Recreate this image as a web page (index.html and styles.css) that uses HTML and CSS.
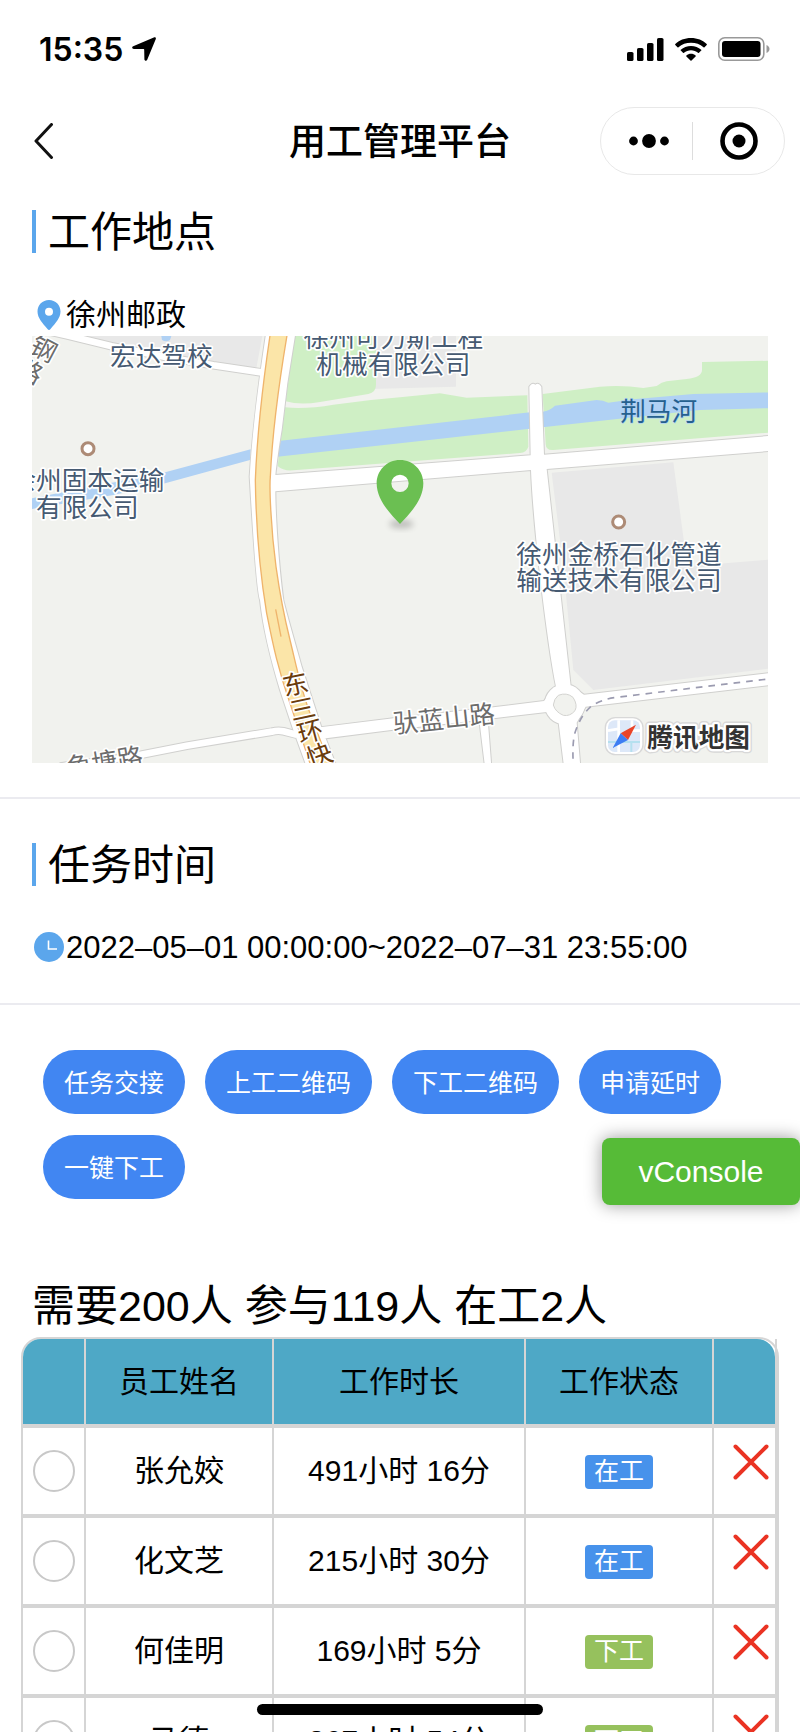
FILE: index.html
```html
<!DOCTYPE html>
<html lang="zh-CN">
<head>
<meta charset="utf-8">
<meta name="viewport" content="width=device-width, initial-scale=1">
<title>用工管理平台</title>
<link rel="stylesheet" href="styles.css">
</head>
<body>
<div class="screen">
  <header class="top">
    <div class="status">
      <div class="status-left">
        <span class="clock">15:35</span>
        <svg class="i-loc" viewBox="0 0 24 24" aria-hidden="true"><path d="M21.800.4C23.400-.2 24.300.9 23.700 2.300L15.200 22.700C14.600 24.400 12.500 24 12.400 22.300L12.200 12.700Q12.200 12.100 11.600 12.100L1.900 12C0 11.900-.5 10 1.200 9.200Z"/></svg>
      </div>
      <div class="status-right">
        <svg class="i-signal" viewBox="0 0 37 23" aria-hidden="true"><rect x="0" y="14" width="6.500" height="9" rx="1.600"/><rect x="10" y="10" width="6.500" height="13" rx="1.600"/><rect x="20" y="5" width="6.500" height="18" rx="1.600"/><rect x="30" y="0" width="6.500" height="23" rx="1.600"/></svg>
        <svg class="i-wifi" viewBox="0 0 32 23" aria-hidden="true"><path d="M16 0C22.300 0 28 2.300 31.700 6.100Q32.100 6.600 31.700 7L29.500 9.200Q29 9.600 28.500 9.200C25.100 6.200 20.800 4.800 16 4.800S6.900 6.200 3.500 9.200Q3 9.600 2.500 9.200L.3 7Q-.1 6.600.3 6.100C4 2.300 9.700 0 16 0ZM16 7.900C20 7.900 23.500 9.400 26.200 11.700Q26.700 12.200 26.200 12.600L24 14.800Q23.500 15.200 23 14.800C21.100 13.200 18.700 12.300 16 12.300S10.900 13.200 9 14.800Q8.500 15.200 8 14.800L5.800 12.600Q5.300 12.200 5.800 11.700C8.500 9.400 12 7.900 16 7.900ZM16 15.800C17.800 15.800 19.400 16.500 20.600 17.400Q21.100 17.900 20.600 18.400L16.500 22.600Q16 23.100 15.500 22.600L11.400 18.400Q10.900 17.900 11.400 17.400C12.600 16.500 14.200 15.800 16 15.800Z"/></svg>
        <svg class="i-battery" viewBox="0 0 52 24" aria-hidden="true"><rect x=".8" y=".8" width="45" height="22.400" rx="6" fill="none" stroke="#999" stroke-width="1.600"/><rect x="4" y="4" width="38.500" height="16" rx="3"/><path d="M48.500 8C52.500 9.500 52.500 14.500 48.500 16Z" fill="#999"/></svg>
      </div>
    </div>
    <div class="nav">
      <button class="back" type="button" aria-label="返回"><svg viewBox="0 0 20 36" aria-hidden="true"><path d="M17.500 1.500 2 18 17.500 34.500"/></svg></button>
      <h1 class="title">用工管理平台</h1>
      <div class="capsule">
        <button type="button" aria-label="更多"><svg class="i-more" viewBox="0 0 40 14" aria-hidden="true"><circle cx="4.500" cy="7" r="4.400"/><circle cx="20" cy="7" r="6.900"/><circle cx="35.500" cy="7" r="4.400"/></svg></button>
        <button type="button" aria-label="关闭"><svg class="i-close" viewBox="0 0 38 38" aria-hidden="true"><circle cx="19" cy="19" r="16.500" fill="none" stroke="#000" stroke-width="4.600"/><circle cx="19" cy="19" r="6.500"/></svg></button>
      </div>
    </div>
  </header>

  <main class="content">
    <section class="section place">
      <h2 class="heading">工作地点</h2>
      <p class="info">
        <svg class="info-icon" viewBox="0 0 30 30" aria-hidden="true"><path fill="#5ba6ec" fill-rule="evenodd" d="M15 0C21.500 0 26.500 5 26.500 11.500 26.500 18 21.500 23 16.500 29Q15 31 13.500 29C8.500 23 3.500 18 3.500 11.500 3.500 5 8.500 0 15 0ZM15 7.800A4 4 0 1 0 15 15.800 4 4 0 1 0 15 7.800Z"/></svg>
        <span>徐州邮政</span>
      </p>
      <svg class="map" viewBox="96 48 2208 1280" role="img" aria-label="工作地点地图">
        <defs>
          <filter id="soft" x="-50%" y="-50%" width="200%" height="200%"><feGaussianBlur stdDeviation="9"/></filter>
          <g id="roads">
            <path d="M797 48C770 230 758 330 749 470C757 600 768 800 780 840C790 930 810 1010 840 1110L880 1230 920 1340H1010L965 1225 905 1040C880 950 862 890 850 840C832 700 826 560 826 514L1593 450C1600 620 1640 960 1668 1100L1632 1143 1480 1162 1180 1195 960 1222V1257L1180 1229 1438 1200 1455 1340H1474L1463 1197 1640 1176 1676 1208 1692 1340H1741L1730 1208 1757 1160 2320 1094V1058L1752 1124 1712 1098 1640 447 2320 392V347L1632 404 1624 200Q1616 186 1606 194 1596 186 1588 200L1592 406 826 465C830 430 838 370 845 330L862 190 886 40Z"/>
            <circle cx="1694" cy="1153" r="60"/>
          </g>
          <g id="lanes">
            <path d="M890 1244 850 1234Q835 1230 815 1235L560 1277 400 1309 180 1340"/>
            <path d="M96 22 200 46 335 79 500 112 640 136 790 158"/>
          </g>
        </defs>
        <rect x="90" y="40" width="2220" height="1300" fill="#f1f2ee"/>
        <path fill="#e8e8e8" d="M200 48H787L768 150 640 124 340 78ZM1120 48H1368V200L1110 207ZM1655 458 2020 427 2052 665V740L2320 718V1044L1780 1110 1720 1050 1690 740Z"/>
        <path fill="#cfefc5" d="M884 40H1128V195Q1128 217 1105 222L960 246Q900 256 857 244ZM855 262Q920 268 1000 254 1100 240 1200 232L1320 220 1400 233 1582 226 1585 380Q1580 397 1560 399L880 451Q850 454 833 438ZM1628 222 1800 200Q1870 195 1930 204L1970 198Q1985 186 2000 184L2060 177Q2106 172 2106 150V126L2320 122V337L1660 390Q1638 392 1637 372Z"/>
        <path fill="#b0d1f4" d="M484 48H514L510 60Q498 67 486 60ZM842 362 1200 322 1590 277V326L1200 370 832 410ZM1628 275Q1650 272 1665 257L1790 240Q1810 240 1825 248L1900 238 2080 222 2320 217V264L2100 270 1960 285 1628 322ZM752 388 490 458 96 535V567L340 525 490 491 750 420Z"/>
        <use href="#roads" class="casing"/>
        <use href="#lanes" class="lane-casing"/>
        <use href="#roads" class="paving"/>
        <use href="#lanes" class="lane"/>
        <path fill="#f1f2ee" stroke="#d3d3d0" stroke-width="3" d="M1675 1126Q1700 1116 1719 1132 1734 1155 1725 1172 1710 1190 1690 1186 1666 1176 1660 1155 1662 1136 1675 1126Z"/>
        <path fill="#fbe5a8" stroke="#efb46c" stroke-width="4" d="M811 40C790 180 772 330 766 480C768 620 780 760 800 880C820 980 835 1050 870 1150L935 1345H993L930 1180C900 1100 885 1020 870 960C850 880 835 790 828 740C812 620 808 500 811 470C815 380 830 230 862 40Z"/>
        <path class="seam" d="M827 868 843 950"/>
        <path class="rail" d="M2296 1078 2080 1104 1850 1132Q1800 1138 1770 1162 1740 1190 1725 1238 1716 1270 1720 1335"/>
        <g class="poi-ring"><circle cx="264" cy="386" r="18"/><circle cx="1856" cy="606" r="18"/></g>
        <g class="label">
          <text x="484" y="138">宏达驾校</text>
          <text x="1180" y="82">徐州可力斯工程</text>
          <text x="1180" y="161">机械有限公司</text>
          <text x="262" y="510">余州固本运输</text>
          <text x="262" y="590">有限公司</text>
          <text x="1857" y="731">徐州金桥石化管道</text>
          <text x="1857" y="811">输送技术有限公司</text>
        </g>
        <g class="label label-road">
          <text transform="translate(118 112) rotate(28)">钢</text>
          <text transform="translate(76 178) rotate(28)">路</text>
          <text transform="translate(318 1354) rotate(-9)">鱼塘路</text>
          <text transform="translate(1334 1224) rotate(-6)">驮蓝山路</text>
        </g>
        <g class="label label-highway">
          <text transform="translate(892 1120) rotate(-12)">东</text>
          <text transform="translate(914 1194) rotate(-12)">三</text>
          <text transform="translate(938 1262) rotate(-15)">环</text>
          <text transform="translate(968 1332) rotate(-20)">快</text>
        </g>
        <text class="label label-river" x="1976" y="302">荆马河</text>
        <ellipse cx="1204" cy="612" rx="36" ry="13" fill="#000" opacity=".22" filter="url(#soft)"/>
        <path fill="#6bbf52" fill-rule="evenodd" d="M1200 420C1240 420 1270 452 1270 490C1270 540 1230 580 1200 612C1170 580 1130 540 1130 490C1130 452 1160 420 1200 420ZM1200 464A26 26 0 1 0 1200 516A26 26 0 1 0 1200 464Z"/>
        <g>
          <rect x="1816" y="1193" width="113" height="111" rx="30" fill="#fff" stroke="#d8d8d8" stroke-width="4"/>
          <rect x="1824" y="1201" width="96" height="95" rx="20" fill="#dde8f8"/>
          <path d="M1856 1201V1296M1896 1201V1228M1824 1232 1860 1226M1890 1232H1920" stroke="#fff" stroke-width="8"/>
          <path d="M1824 1266H1920M1894 1266V1296" stroke="#b5e0ef" stroke-width="6"/>
          <path d="M1908 1214 1862 1240 1884 1260Z" fill="#ea4429"/>
          <path d="M1838 1284 1862 1240 1884 1260Z" fill="#3d7df3"/>
          <text class="brand brand-edge" x="1942" y="1280" aria-hidden="true">腾讯地图</text>
          <text class="brand" x="1942" y="1280">腾讯地图</text>
        </g>
      </svg>
    </section>

    <section class="section time">
      <h2 class="heading">任务时间</h2>
      <p class="info">
        <svg class="info-icon" viewBox="0 0 30 30" aria-hidden="true"><circle cx="15" cy="15" r="15" fill="#5ba6ec"/><path d="M14.500 8.500V17H23" fill="none" stroke="#fff" stroke-width="1.600"/></svg>
        <span>2022–05–01 00:00:00~2022–07–31 23:55:00</span>
      </p>
    </section>

    <div class="actions">
      <button type="button">任务交接</button>
      <button type="button">上工二维码</button>
      <button type="button">下工二维码</button>
      <button type="button">申请延时</button>
      <button type="button">一键下工</button>
    </div>

    <h2 class="summary">需要200人 参与119人 在工2人</h2>

    <div class="table-box">
      <table class="staff">
        <thead>
          <tr><th class="narrow"></th><th class="mid">员工姓名</th><th class="wide">工作时长</th><th class="mid">工作状态</th><th class="narrow"></th></tr>
        </thead>
        <tbody>
          <tr>
            <td class="pick"><input type="radio" name="r1" aria-label="张允姣"></td><td>张允姣</td><td>491小时 16分</td><td class="state"><span class="tag">在工</span></td>
            <td class="drop"><button class="remove" type="button" aria-label="移除"><svg viewBox="0 0 36 36" aria-hidden="true"><path d="M2.500 2.500 33.500 33.500M33.500 2.500 2.500 33.500"/></svg></button></td>
          </tr>
          <tr>
            <td class="pick"><input type="radio" name="r2" aria-label="化文芝"></td><td>化文芝</td><td>215小时 30分</td><td class="state"><span class="tag">在工</span></td>
            <td class="drop"><button class="remove" type="button" aria-label="移除"><svg viewBox="0 0 36 36" aria-hidden="true"><path d="M2.500 2.500 33.500 33.500M33.500 2.500 2.500 33.500"/></svg></button></td>
          </tr>
          <tr>
            <td class="pick"><input type="radio" name="r3" aria-label="何佳明"></td><td>何佳明</td><td>169小时 5分</td><td class="state"><span class="tag off">下工</span></td>
            <td class="drop"><button class="remove" type="button" aria-label="移除"><svg viewBox="0 0 36 36" aria-hidden="true"><path d="M2.500 2.500 33.500 33.500M33.500 2.500 2.500 33.500"/></svg></button></td>
          </tr>
          <tr>
            <td class="pick"><input type="radio" name="r4" aria-label="马德"></td><td>马德</td><td>267小时 54分</td><td class="state"><span class="tag off">下工</span></td>
            <td class="drop"><button class="remove" type="button" aria-label="移除"><svg viewBox="0 0 36 36" aria-hidden="true"><path d="M2.500 2.500 33.500 33.500M33.500 2.500 2.500 33.500"/></svg></button></td>
          </tr>
        </tbody>
      </table>
    </div>
  </main>
  <button class="vconsole" type="button">vConsole</button>
  <div class="home-bar"></div>
</div>
</body>
</html>
```
FILE: styles.css
```css
* { box-sizing: border-box; }
body {
  margin: 0;
  background: #fff;
  color: #000;
  font-family: "Liberation Sans", "Noto Sans CJK SC", sans-serif;
  font-size: 30px;
}
button { font: inherit; border: 0; padding: 0; background: none; color: inherit; }
svg { display: block; }
h1, h2, p { margin: 0; font-weight: 400; }

.screen { position: relative; height: 100vh; overflow: hidden; display: flex; flex-direction: column; }

.top { flex: none; }
.status { display: flex; justify-content: space-between; align-items: center; height: 98px; padding: 0 30px 0 39px; }
.status-left, .status-right { display: flex; align-items: center; }
.status-left { gap: 9px; }
.status-right { gap: 11px; }
.clock { font-family: Inter, sans-serif; font-weight: 600; font-size: 32px; }
.i-loc { width: 24px; height: 24px; }
.i-signal { width: 37px; height: 23px; }
.i-wifi { width: 32px; height: 23px; }
.i-battery { width: 52px; height: 24px; }

.nav { display: grid; grid-template-columns: minmax(0, 1fr) auto minmax(0, 1fr); align-items: center; height: 86px; padding: 0 15px; }
.back { justify-self: start; margin-left: 19px; }
.back svg { width: 20px; height: 36px; fill: none; stroke: #111; stroke-width: 3; stroke-linecap: round; stroke-linejoin: round; }
.title { padding-top: 4px; font-size: 37px; font-weight: 500; line-height: 44px; }
.capsule { justify-self: end; display: flex; width: 185px; height: 68px; border: 1px solid #e8e8e8; border-radius: 34px; }
.capsule button { flex: 1; display: flex; align-items: center; justify-content: center; margin: 14px 0; }
.capsule button + button { border-left: 1px solid #ddd; }
.i-more { width: 40px; height: 14px; margin-left: 5px; }
.i-close { width: 38px; height: 38px; }

.content { flex: 1; min-height: 0; overflow: hidden; }
.section { padding: 0 32px; border-bottom: 2px solid #ebebf0; }
.place { padding-top: 26px; padding-bottom: 34px; }
.time { padding-top: 44px; padding-bottom: 34px; }
.heading { border-left: 4px solid #5ba6ec; padding: 2px 0 0 12px; font-size: 42px; line-height: 41px; }
.info { display: flex; align-items: center; gap: 2px; padding-left: 2px; font-size: 30px; line-height: 43px; margin-top: 40px; }
.time .info { font-size: 31px; }
.info-icon { width: 30px; height: 30px; flex: none; }
.map { width: 100%; height: auto; }

.casing { fill: #fff; stroke: #d0d0ce; stroke-width: 6; }
.paving { fill: #fff; stroke: none; }
.lane-casing { fill: none; stroke: #d0d0ce; stroke-width: 26; }
.lane { fill: none; stroke: #fff; stroke-width: 20; }
.seam { fill: none; stroke: #efb46c; stroke-width: 4; }
.rail { fill: none; stroke: #9b9bb0; stroke-width: 5; stroke-dasharray: 20 18; }
.poi-ring { fill: #fff; stroke: #ad8b76; stroke-width: 9; }
.label { font-size: 77px; fill: #465a72; text-anchor: middle; paint-order: stroke; stroke: #fff; stroke-width: 10; stroke-linejoin: round; }
.label-road { fill: #6c6c6c; }
.label-highway { fill: #6b3c0c; }
.label-river { fill: #25608f; stroke: #b0d1f4; stroke-width: 4; }
.brand { font-size: 77px; font-weight: 700; fill: #333; paint-order: stroke; stroke: #fff; stroke-width: 14; stroke-linejoin: round; }
.brand-edge { stroke: #d8d8d8; stroke-width: 22; }

.actions { display: flex; flex-wrap: wrap; gap: 21px 20px; padding: 45px 43px 0; }
.actions button { height: 64px; padding: 0 21px 2px; border-radius: 32px; background: #4186f2; color: #fff; font-size: 25px; }

.summary { margin-top: 76px; padding: 0 32px; font-size: 43px; line-height: 62px; }

.table-box { margin: 0 21px; border: 2px solid #d5d5d5; border-radius: 20px 20px 0 0; }
.staff { width: 100%; table-layout: fixed; border-collapse: separate; border-spacing: 0; text-align: center; }
.staff th, .staff td { height: 90px; padding: 0 0 5px; font-weight: 400; border-right: 2px solid #d5d5d5; border-bottom: 4px solid #d5d5d5; vertical-align: middle; }
.staff th { height: 89px; background: #4ea8c6; background-clip: padding-box; }
.staff th:first-child { border-top-left-radius: 18px; }
.staff th:last-child { position: relative; background: none; }
.staff th:last-child::before { content: ""; position: absolute; inset: 0; border-top-right-radius: 18px; background: #4ea8c6; }
.narrow { width: 8.333%; }
.mid { width: 25%; }
.wide { width: 33.333%; }
.staff .pick { padding: 0 0 0 1px; }
.staff .state { padding: 0; }
.staff .drop { padding: 0 6px 18px 0; }
.staff input { appearance: none; display: block; width: 42px; height: 42px; margin: 0 auto; border: 2px solid #c8c8c8; border-radius: 50%; background: #fff; }
.tag { display: inline-block; width: 68px; height: 34px; border-radius: 4px; background: #4792eb; color: #fff; font-size: 25px; line-height: 32px; vertical-align: middle; }
.tag.off { background: #96c15d; }
.remove { display: block; margin-left: auto; }
.remove svg { width: 36px; height: 36px; fill: none; stroke: #ea3323; stroke-width: 4; stroke-linecap: round; }

.vconsole { position: absolute; right: 0; top: 1138px; width: 198px; height: 67px; border-radius: 8px; background: #56bb37; color: #fff; font-size: 30px; box-shadow: 0 0 17px rgba(0, 0, 0, .4); }
.home-bar { position: absolute; left: 50%; bottom: 17px; width: 286px; height: 11px; margin-left: -143px; border-radius: 6px; background: #000; }
```
